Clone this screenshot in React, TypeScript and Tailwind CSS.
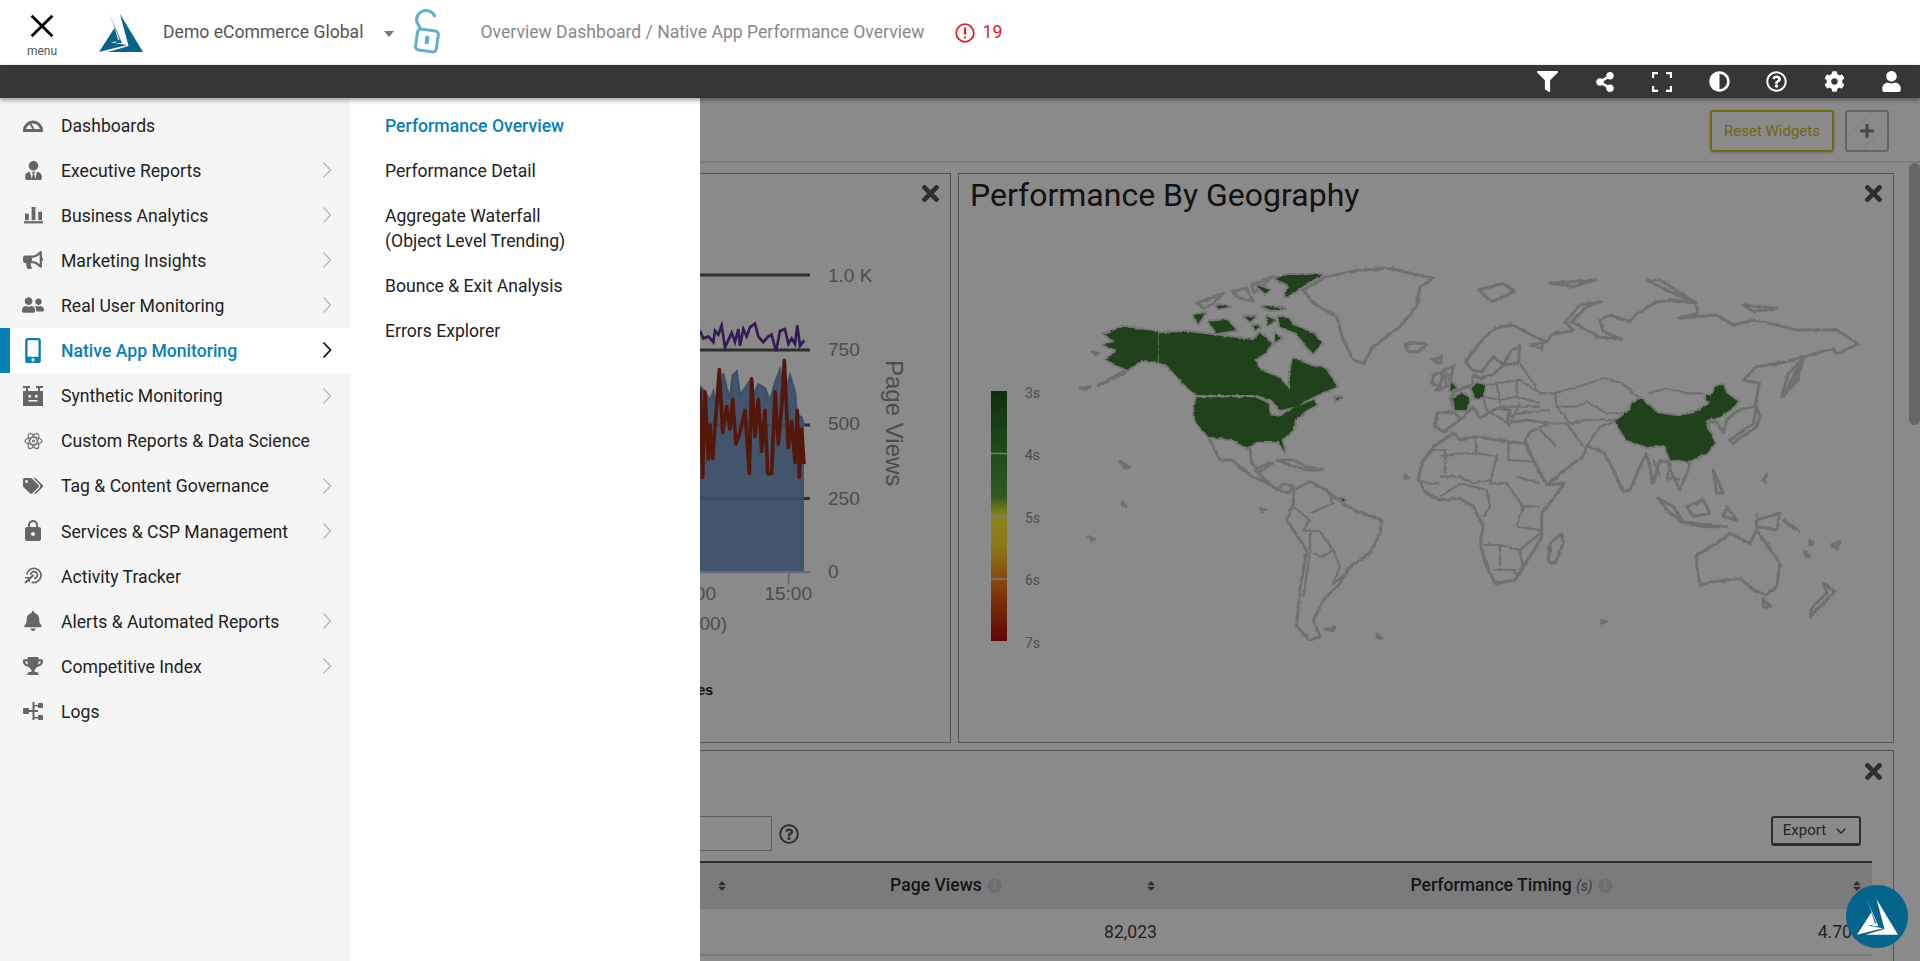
import { FaBell, FaBullhorn, FaCog, FaFilter, FaMobileAlt, FaRegQuestionCircle, FaShareAlt, FaTags, FaTimes, FaTrophy, FaUser, FaUserFriends, FaUserTie, FaAdjust, FaPlus, FaSort, FaInfoCircle } from "react-icons/fa"
import { MdLock } from "react-icons/md"
import { ChevronDown } from "lucide-react"
import type { ReactNode } from "react"

function Logo({ className, fill }: { className: string; fill: string }) {
  return (
    <svg viewBox="0 0 44 40" className={className} fill={fill}>
      <path d="M21 1 44 39 9 39 29.500 33Z" />
      <path d="M0 39 15.500 15 19.500 28 12 29.500 28 32Z" />
      <path d="M10 0 23 30 15.500 30 20.500 26.500Z" />
    </svg>
  )
}

function GaugeIcon() {
  return (
    <svg viewBox="0 0 20 14" className="w-[20px] h-[14px]" fill="none" stroke="#666" strokeWidth="3">
      <path d="M1.500 12.500A8.500 8.500 0 0 1 18.500 12.500Z" />
      <path d="M7.500 6 10.500 11" strokeWidth="2" />
    </svg>
  )
}

function BarsIcon() {
  return (
    <svg viewBox="0 0 20 18" className="w-[19px] h-[17px]" fill="#666">
      <rect x="1" y="7" width="4" height="7" />
      <rect x="8" y="0" width="4" height="14" />
      <rect x="15" y="5" width="4" height="9" />
      <rect x="0" y="15" width="20" height="2.400" />
    </svg>
  )
}

function RobotIcon() {
  return (
    <svg viewBox="0 0 20 20" className="w-[20px] h-[20px]" fill="#666">
      <path d="M0 0H7V2H5V5H3V2H0ZM13 0H20V2H17V5H15V2H13Z" />
      <rect x="0" y="5" width="20" height="15" />
      <rect x="5.500" y="9" width="2.500" height="2.500" fill="#f4f4f4" />
      <rect x="12" y="9" width="2.500" height="2.500" fill="#f4f4f4" />
      <rect x="5.500" y="14" width="9" height="1.600" fill="#f4f4f4" />
    </svg>
  )
}

function AtomIcon() {
  return (
    <svg viewBox="0 0 20 20" className="w-[19px] h-[20px]" fill="none" stroke="#777" strokeWidth="1.300">
      <ellipse cx="10" cy="10" rx="9" ry="3.800" />
      <ellipse cx="10" cy="10" rx="9" ry="3.800" transform="rotate(60 10 10)" />
      <ellipse cx="10" cy="10" rx="9" ry="3.800" transform="rotate(120 10 10)" />
      <circle cx="10" cy="10" r="1.600" fill="#777" stroke="none" />
    </svg>
  )
}

function ActivityIcon() {
  return (
    <svg viewBox="0 0 20 18" className="w-[19px] h-[17px]" fill="none" stroke="#666" strokeWidth="1.800">
      <path d="M3 8A7.500 7.500 0 1 1 8 16" />
      <path d="M7 8.500A3.600 3.600 0 1 1 10.500 12" />
      <path d="M1 17 10 8.500" strokeWidth="2.200" />
      <path d="M1 11.500H5.500V16" strokeWidth="1.600" />
    </svg>
  )
}

function LogsIcon() {
  return (
    <svg viewBox="0 0 20 18" className="w-[20px] h-[18px]" fill="#666">
      <rect x="0" y="6" width="6" height="6" rx="1" />
      <rect x="15" y="1" width="5" height="5" rx="1" />
      <rect x="15" y="13" width="5" height="5" rx="1" />
      <path d="M9.500 0H11.500V18H9.500ZM6 8H15V10H6ZM11 3H15V4.500H11ZM11 15H15V16.500H11Z" />
    </svg>
  )
}

const menu: { label: string; icon: ReactNode; sub?: boolean; active?: boolean }[] = [
  { label: "Dashboards", icon: <GaugeIcon /> },
  { label: "Executive Reports", icon: <FaUserTie size={19} color="#666" />, sub: true },
  { label: "Business Analytics", icon: <BarsIcon />, sub: true },
  { label: "Marketing Insights", icon: <FaBullhorn size={20} color="#666" />, sub: true },
  { label: "Real User Monitoring", icon: <FaUserFriends size={22} color="#666" />, sub: true },
  { label: "Native App Monitoring", icon: <FaMobileAlt size={25} color="#0a7fb5" />, sub: true, active: true },
  { label: "Synthetic Monitoring", icon: <RobotIcon />, sub: true },
  { label: "Custom Reports & Data Science", icon: <AtomIcon /> },
  { label: "Tag & Content Governance", icon: <FaTags size={20} color="#666" />, sub: true },
  { label: "Services & CSP Management", icon: <MdLock size={24} color="#666" />, sub: true },
  { label: "Activity Tracker", icon: <ActivityIcon /> },
  { label: "Alerts & Automated Reports", icon: <FaBell size={20} color="#666" />, sub: true },
  { label: "Competitive Index", icon: <FaTrophy size={20} color="#666" />, sub: true },
  { label: "Logs", icon: <LogsIcon /> },
]

const topIcons = [
  <FaFilter size={21} />,
  <FaShareAlt size={20} />,
  <svg viewBox="0 0 20 20" className="w-[20px] h-[20px]" fill="none" stroke="white" strokeWidth="2.400"><path d="M1 6V1H6M14 1H19V6M19 14V19H14M6 19H1V14" /></svg>,
  <FaAdjust size={21} />,
  <FaRegQuestionCircle size={21} />,
  <FaCog size={21} />,
  <FaUser size={21} />,
]

function Chart() {
  const purple = "30,435 40,455 55,450 70,465 75,435 85,445 95,420 105,480 115,460 125,440 135,465 145,430 150,475 160,430 170,450 180,425 195,415 205,450 220,465 235,450 245,445 258,490 270,435 285,430 295,470 305,455 315,470 322,420 330,475 343,460"
  const area = "30,585 45,600 60,625 70,600 80,640 90,620 100,550 110,590 120,620 128,555 140,545 150,610 165,590 180,570 190,610 205,580 225,590 240,625 255,575 270,540 285,610 300,555 315,600 320,660 335,670 342,690"
  const brown = "30,590 38,830 45,600 55,780 60,690 68,780 78,660 88,540 98,710 110,640 120,700 128,620 138,740 150,710 165,650 178,820 185,565 195,720 205,620 215,760 225,650 233,820 245,820 255,600 265,740 275,640 283,515 295,750 305,680 315,790 322,650 328,830 335,700 342,795"
  return (
    <svg viewBox="16 174 934 568" className="block w-full h-full">
      <path d="M640 275H810M640 350H810M640 425H810M640 498.500H810" stroke="#555" strokeWidth="3" />
      <g transform="translate(690 170) scale(0.3333 0.37)">
        <polygon points={`${area} 342,1085 -100,1085 -100,600`} fill="#6f93c4" opacity="0.9" />
        <polyline points={area} fill="none" stroke="#6c94ca" strokeWidth="7" />
        <polyline points={brown} fill="none" stroke="#9e2c14" strokeWidth="11" strokeLinejoin="round" />
        <polyline points={purple} fill="none" stroke="#65309c" strokeWidth="8" />
        <path d="M-100 1087H360M296 1087V1120" stroke="#bcc8d8" strokeWidth="6" />
      </g>
      <g fill="#8f8f8f" fontFamily='"Liberation Sans", Arial, sans-serif' fontSize="19">
        <text x="828" y="282">1.0 K</text>
        <text x="828" y="356">750</text>
        <text x="828" y="430">500</text>
        <text x="828" y="505">250</text>
        <text x="828" y="578">0</text>
        <text x="812" y="600" textAnchor="end">15:00</text>
        <text x="716" y="600" textAnchor="end">15:00</text>
        <text x="727" y="630" textAnchor="end">(+00:00)</text>
        <text x="886" y="360" fontSize="24" transform="rotate(90 886 360)">Page Views</text>
      </g>
      <text x="713" y="695" textAnchor="end" fill="#1a1a1a" fontWeight="700" fontSize="14" fontFamily='"Liberation Sans", Arial, sans-serif'>Page Views Minutes</text>
    </svg>
  )
}

function WorldMap() {
  const americasLand = [
    "M1030 360 1100 320 1200 300 1290 295 1350 310 1420 325 1380 350 1370 410 1320 470 1240 530 1210 580 1180 570 1150 510 1130 440 1060 400Z",
    "M1335 525 1365 518 1400 522 1375 545 1345 545Z",
    "M710 400 790 370 760 400 730 415Z",
    "M815 365 860 355 880 395 840 385Z",
    "M875 345 940 320 880 370Z",
    "M745 800 780 870 815 870 870 915 960 960 985 970 1000 950 975 940 950 960 905 920 885 900 920 880 940 880 900 905 875 880 870 835 820 810Z",
    "M1000 960 1050 935 1100 960 1150 1000 1180 1020 1265 1050 1260 1090 1230 1150 1170 1190 1140 1240 1090 1290 1060 1350 1080 1400 1050 1410 1010 1370 1020 1260 1040 1140 980 1050 1000 1000Z",
    "M950 870 1000 870 1040 890 1090 900 1040 900 990 885Z",
    "M480 875 510 892 495 895Z", "M360 655 390 650 375 658Z", "M395 545 415 550 405 555Z", "M415 645 500 600 490 612 430 640Z",
    "M488 995 500 1010 488 1005Z", "M900 1015 920 1020 905 1025Z", "M385 1100 405 1108 395 1110Z", "M1095 1378 1125 1372 1115 1382Z", "M1250 1393 1265 1405 1255 1405Z",
    "M1335 915 1345 925 1335 925Z", "M1425 660 1460 650 1450 600 1480 590 1470 640 1440 660Z",
  ]
  const americasLines = [
    "M1050 1080 1050 1150 1030 1280", "M1000 1010 1050 1050 1030 1080 1080 1085 1120 1140 1140 1190 1120 1240 1150 1220",
    "M1100 960 1120 1000 1050 1030", "M1060 1150 1090 1160 1120 1140", "M1110 985 1150 985 1150 1005",
  ]
  const americasGreen = [
    "M440 490 490 470 595 485 595 575 545 570 500 600 440 570 470 540 430 525 465 515 430 490Z",
    "M597 490 680 485 760 495 880 510 900 490 935 520 915 550 885 570 900 600 960 625 990 660 990 610 1000 565 1060 590 1085 590 1100 600 1130 650 1060 680 1010 710 985 715 960 720 935 690 890 675 710 675 690 660 660 630 620 585 597 578Z",
    "M710 682 885 682 925 700 930 735 955 740 1000 715 1060 690 1070 705 1040 720 1005 750 1000 780 965 810 975 845 955 815 890 815 860 835 820 810 745 800 710 760 700 730Z",
    "M955 440 985 445 1000 465 1060 490 1085 520 1060 550 1040 530 1010 490 960 470Z",
    "M920 440 945 450 925 465Z",
    "M985 315 1085 315 1040 340 1000 370 975 380 985 345 945 325Z",
    "M890 345 930 360 915 370Z", "M700 435 735 430 715 460Z", "M745 455 800 450 830 480 770 490Z",
    "M855 440 885 440 870 455Z", "M905 410 975 415 935 420Z", "M770 405 810 410 775 415Z", "M880 465 900 470 885 480Z", "M945 490 965 505 945 515Z", "M1125 682 1145 682 1130 690Z", "M1145 985 1155 990 1148 995Z",
    "M880 510 905 495 925 525 905 540Z",
  ]
  const eurasiaLand = [
    "M45 485 30 445 45 425 95 405 100 375 120 385 165 370 190 345 235 340 240 290 215 300 190 345 160 320 125 365 95 360 78 335 95 310 130 265 165 235 220 225 265 250 310 272 305 295 270 285 320 275 340 250 400 243 375 215 420 165 485 155 440 170 395 215 440 240 480 262 545 268 490 245 480 210 510 195 570 215 585 195 650 155 700 150 770 160 772 190 715 205 830 195 880 225 945 210 1070 240 1190 240 1255 282 1190 312 1180 295 1095 320 1045 370 1025 440 1075 390 1090 320 1040 335 950 350 910 390 958 400 945 470 895 480 860 510 850 550 830 515 800 515 825 580 800 610 750 632 745 660 720 720 700 680 680 690 690 640 660 630 640 700 620 610 600 650 570 720 550 725 510 640 490 605 440 590 425 625 400 640 320 705 290 650 255 575 270 545 330 520 260 510 200 520 210 480 170 475 120 505 100 470 60 510Z",
    "M40 550-20 590-55 640-65 690-40 730 0 750 60 745 100 770 130 830 120 880 140 950 165 1000 225 990 270 920 305 860 305 790 375 700 320 705 290 650 255 580 205 575 110 560 60 570Z",
    "M-10 490 45 485 60 510 10 545-15 530Z",
    "M115 120 190 100 225 125 155 155Z", "M330 100 465 90 400 110Z", "M620 90 660 90 770 160 700 130Z", "M910 165 1010 175 940 185Z",
    "M325 935 330 880 365 850 370 880 345 940Z",
    "M870 570 940 520 950 470 960 500 950 530 880 580Z", "M1030 440 1050 400 1090 320 1060 400Z",
    "M655 745 700 770 730 815 690 790Z", "M720 815 860 830 790 830Z", "M740 770 790 750 810 790 760 800Z", "M820 660 850 730 830 730Z", "M860 770 890 810 850 800Z", "M950 810 1020 790 1010 840 950 830Z", "M1030 810 1080 845 1050 830Z",
    "M770 915 830 880 870 850 930 880 950 840 1020 940 1010 1010 980 1035 940 1020 900 985 820 995 780 1005 770 950Z",
    "M970 1045 990 1070 970 1070Z", "M1150 1000 1185 1025 1110 1100 1115 1075 1160 1030Z",
    "M1095 905 1110 920 1095 915Z", "M1175 885 1200 875 1190 895Z", "M1110 870 1120 880 1110 885Z", "M485 1110 500 1115 485 1120Z", "M970 690 980 672 975 695Z", "M-25 330 5 320 0 340Z", "M-20 375 10 365 0 410-25 400Z",
  ]
  const eurasiaLines = [
    "M240 340 300 430 345 430 430 405 490 385 545 400 600 445", "M345 430 350 470 410 470 440 455 500 490 560 490", "M350 470 390 520 440 510 530 510",
    "M330 520 380 520 430 590", "M300 540 350 590", "M440 590 480 530 525 515", "M625 430 680 415 740 430 790 430",
    "M135 405 170 400 240 390 300 430", "M130 440 180 450 230 440 300 460", "M130 445 140 480 190 510 210 530", "M170 400 180 460", "M230 390 230 440", "M180 470 300 470", "M200 500 240 490 330 480", "M240 460 210 520",
    "M105 560 110 610 170 620 150 700 200 700", "M205 575 205 630 285 635", "M110 610 60 610 0 620", "M0 680 60 680 100 700 150 690", "M0 740 60 700 140 720 150 770 130 800", "M230 680 300 700", "M200 700 250 770 300 770", "M250 770 230 830 300 840", "M130 885 180 885 240 900 300 850", "M180 885 180 950", "M160 960 230 960", "M240 900 250 960", "M-60 640-20 600 15 600 15 670", "M-65 690-40 700 0 700",
    "M680 630 700 680 720 690", "M640 630 660 680", "M220 965 235 975", "M950 830 950 790",
  ]
  const eurasiaGreen = [
    "M40 445 65 430 90 445 80 480 45 480Z", "M95 415 110 400 135 405 130 440 105 445Z", "M20 370 30 390 45 410 50 415 30 420 35 400Z",
    "M525 515 570 480 575 460 605 445 625 465 655 490 710 498 760 490 810 460 795 440 820 430 825 410 850 405 860 430 895 455 870 480 840 500 800 510 800 530 825 580 800 610 750 632 690 630 675 585 620 590 560 570Z",
  ]
  const landProps = { fill: "#fff", stroke: "#cfcfcf", strokeWidth: 9, strokeLinejoin: "round" as const }
  const haloProps = { fill: "#fff", stroke: "#dedede", strokeWidth: 12, strokeLinejoin: "round" as const }
  return (
    <svg viewBox="959 222 934 520" className="block w-full h-[520px]">
      <defs>
        <linearGradient id="scale" x1="0" y1="0" x2="0" y2="1">
          <stop offset="0" stopColor="#1c581c" />
          <stop offset="0.25" stopColor="#3f8a34" />
          <stop offset="0.42" stopColor="#55a638" />
          <stop offset="0.5" stopColor="#fff530" />
          <stop offset="0.62" stopColor="#ffe030" />
          <stop offset="0.75" stopColor="#ff8a1e" />
          <stop offset="0.85" stopColor="#e24e12" />
          <stop offset="1" stopColor="#b20e0e" />
        </linearGradient>
        <filter id="rough" x="-5%" y="-5%" width="110%" height="110%" colorInterpolationFilters="sRGB">
          <feTurbulence type="fractalNoise" baseFrequency="0.22" numOctaves="2" seed="4" result="noise" />
          <feDisplacementMap in="SourceGraphic" in2="noise" scale="3" xChannelSelector="R" yChannelSelector="G" />
        </filter>
      </defs>
      <g filter="url(#rough)">
        <g transform="translate(960 170) scale(0.3333)">
          {americasLand.map((d) => <path key={d} d={d} {...landProps} />)}
          {americasLines.map((d) => <path key={d} d={d} fill="none" stroke="#cfcfcf" strokeWidth="7" />)}
          {americasGreen.map((d) => <path key={d} d={d} {...haloProps} />)}
          {americasGreen.map((d) => <path key={d} d={d} fill="#3c7a30" />)}
        </g>
        <g transform="translate(1440 250) scale(0.3333)">
          {eurasiaLand.map((d) => <path key={d} d={d} {...landProps} />)}
          {eurasiaLines.map((d) => <path key={d} d={d} fill="none" stroke="#cfcfcf" strokeWidth="6.500" />)}
          {eurasiaGreen.map((d) => <path key={d} d={d} {...haloProps} />)}
          {eurasiaGreen.map((d) => <path key={d} d={d} fill="#3c7a30" />)}
        </g>
      </g>
      <rect x="991" y="391" width="16" height="250" fill="url(#scale)" />
      <path d="M991 453.500H1007M991 517H1007M991 579H1007" stroke="#e2e2e2" strokeWidth="1.600" />
      <g fill="#909090" fontSize="14" fontFamily="Roboto, sans-serif">
        <text x="1025" y="398">3s</text>
        <text x="1025" y="460">4s</text>
        <text x="1025" y="523">5s</text>
        <text x="1025" y="585">6s</text>
        <text x="1025" y="648">7s</text>
      </g>
    </svg>
  )
}

export default function App() {
  return (
    <div className="h-[961px] w-[1920px] overflow-hidden flex flex-col bg-white font-['Roboto',sans-serif]">
      {/* top header */}
      <header className="h-[65px] shrink-0 flex items-center bg-white">
        <div className="w-[84px] flex flex-col items-center pt-[3px]">
          <svg viewBox="0 0 22 22" className="w-[24px] h-[24px]" fill="none" stroke="#000" strokeWidth="2.600"><path d="M1.500 1.500 20.500 20.500M20.500 1.500 1.500 20.500" /></svg>
          <span className="text-[12px] leading-[14px] mt-[6px] mb-[-3px] text-[#555]">menu</span>
        </div>
        <Logo className="w-[44px] h-[40px] ml-[15px] mb-[-1px]" fill="#0b6288" />
        <span className="ml-[20px] text-[17.600px] text-[#555]">Demo eCommerce Global</span>
        <span className="ml-[21px] mt-[3px] w-0 h-0 border-x-[5px] border-x-transparent border-t-[6px] border-t-[#777]" />
        <svg viewBox="0 0 27 46" className="ml-[20px] w-[27px] h-[46px] mt-[-1px]" fill="none" stroke="#5fb0c8" strokeWidth="3">
          <path d="M21 8C19 2 12 0 7 3 2 6 1 12 5 17L7 20" />
          <rect x="2.500" y="21" width="21" height="21" rx="3.500" transform="rotate(8 13 31)" />
          <path d="M13.500 27 12.500 35" strokeWidth="4" />
        </svg>
        <span className="ml-[39px] text-[17.600px] text-[#888]">Overview Dashboard / Native App Performance Overview</span>
        <svg viewBox="0 0 20 20" className="ml-[30px] w-[20px] h-[20px]" fill="none" stroke="#e02020" strokeWidth="1.800">
          <circle cx="10" cy="10" r="8.800" />
          <path d="M10 4.500V11.500M10 13.500V15.500" strokeWidth="2.200" />
        </svg>
        <span className="ml-[8px] text-[17.600px] text-[#e02020]">19</span>
      </header>

      {/* dark toolbar */}
      <div className="relative z-30 h-[33px] shrink-0 bg-[#363636] shadow-[0_2px_5px_rgba(0,0,0,0.4)] flex items-center justify-end text-white">
        {topIcons.map((icon, i) => (
          <span key={i} className="w-[57.300px] flex justify-center">{icon}</span>
        ))}
      </div>

      <main className="relative flex-1 min-h-0 overflow-hidden bg-white">
        {/* page content, dimmed by the overlay */}
        <div className="h-[65px] border-b-2 border-[#e6e6e6] flex justify-end items-start pt-[12px] pr-[31px] gap-[11px]">
          <button className="w-[124px] h-[42px] rounded-[3px] border-2 border-[#d2c420] text-[15px] text-[#d0c020] shadow-[0_1px_3px_rgba(0,0,0,0.2)]">Reset Widgets</button>
          <button className="w-[44px] h-[42px] rounded-[3px] border-2 border-[#bbb] text-[#888] flex items-center justify-center bg-[repeating-linear-gradient(135deg,transparent,transparent_18px,#e4e4e4_18px,#e4e4e4_19px)]">
            <FaPlus size={16} />
          </button>
        </div>

        <div className="flex gap-[7px] pl-[15px] pr-[26px] mt-[10px]">
          <section className="relative flex-1 h-[570px] border border-[#999]">
            <FaTimes size={25} className="absolute top-[7px] right-[7px] text-[#555]" />
            <Chart />
          </section>
          <section className="relative flex-1 h-[570px] border border-[#999]">
            <FaTimes size={25} className="absolute top-[7px] right-[7px] text-[#555]" />
            <h2 className="h-[48px] pl-[11px] text-[32px] leading-[42px] text-[#222]">Performance By Geography</h2>
            <WorldMap />
          </section>
        </div>

        <section className="relative mt-[7px] ml-[15px] mr-[26px] h-[260px] border border-[#999] border-b-0">
          <FaTimes size={25} className="absolute top-[8px] right-[7px] text-[#555]" />
          <div className="flex items-start mt-[65px] pr-[32px] h-[45px]">
            <input className="ml-[400px] w-[356px] h-[35px] border border-[#aaa] bg-white" />
            <FaRegQuestionCircle size={20} className="ml-[7px] mt-[8px] text-[#555]" />
            <button className="ml-auto w-[90px] h-[30px] rounded-[3px] border-2 border-b-[3px] border-[#555] flex items-center justify-center gap-[7px] text-[15px] text-[#444]">
              Export <ChevronDown size={16} />
            </button>
          </div>
          <div className="mr-[21px] border-t-2 border-[#555]">
            <div className="grid grid-cols-[714px_430px_713px] h-[46px] bg-[#e3e4e7] items-center font-medium text-[17.600px] text-[#2a2a2a]">
              <div className="flex items-center justify-end pr-[2px] text-[#555]"><FaSort size={12} /></div>
              <div className="flex items-center pr-[3px] text-[#555]">
                <span className="flex-1 flex justify-center items-center gap-[5px] pl-[17px] pb-[1px] text-[#2a2a2a]">Page Views <FaInfoCircle size={15} className="text-[#ccc]" /></span>
                <FaSort size={12} />
              </div>
              <div className="flex items-center pr-[10px] text-[#555]">
                <span className="flex-1 flex justify-center items-center gap-[5px] pl-[12px] pb-[1px] text-[#2a2a2a]">
                  <span>Performance Timing <i className="font-normal text-[14px] text-[#666]">(s)</i></span>
                  <FaInfoCircle size={15} className="text-[#ccc]" />
                </span>
                <FaSort size={12} />
              </div>
            </div>
            <div className="grid grid-cols-[714px_430px_713px] h-[47px] pt-[1px] items-center border-b-2 border-[#ddd] text-[17.600px] text-[#444]">
              <div />
              <div className="text-right pr-[3px]">82,023</div>
              <div className="text-right pr-[21px]">4.70</div>
            </div>
          </div>
        </section>

        {/* scrollbar thumb */}
        <div className="absolute right-0 top-[65px] w-[11px] h-[262px] rounded-[6px] bg-[#bdbdbd]" />

        {/* overlay that dims the page behind the menu */}
        <div className="absolute inset-0 bg-black/46" />

        {/* open menu */}
        <nav className="absolute left-0 top-0 bottom-0 flex">
          <ul className="w-[350px] bg-[#f5f5f5] pt-[4.500px]">
            {menu.map((item) => (
              <li
                key={item.label}
                className={
                  item.active
                    ? "h-[45.080px] flex items-center bg-white border-l-[10px] border-[#0a7fb5] text-[#0a7fb5] font-medium"
                    : "h-[45.080px] flex items-center border-l-[10px] border-transparent text-[#222]"
                }
              >
                <span className="w-[24px] ml-[11px] flex justify-center">{item.icon}</span>
                <span className="ml-[16px] pt-[2px] text-[17.600px] whitespace-nowrap">{item.label}</span>
                {item.sub && (
                  <svg viewBox="0 0 10 18" className="ml-auto mr-[18px] w-[10px] h-[18px]" fill="none" stroke={item.active ? "#111" : "#bbb"} strokeWidth={item.active ? 1.800 : 1.500}>
                    <path d="M1.500 1.500 8.500 9 1.500 16.500" />
                  </svg>
                )}
              </li>
            ))}
          </ul>
          <ul className="w-[350px] bg-white px-[35px] pt-[5.500px] text-[17.600px] leading-[25px] text-[#222]">
            <li className="py-[10px] text-[#0a7fb5] font-medium">Performance Overview</li>
            <li className="py-[10px]">Performance Detail</li>
            <li className="py-[10px]">Aggregate Waterfall<br />(Object Level Trending)</li>
            <li className="py-[10px]">Bounce &amp; Exit Analysis</li>
            <li className="py-[10px]">Errors Explorer</li>
          </ul>
        </nav>

        {/* floating help bubble */}
        <div className="absolute right-[12px] bottom-[13px] w-[62px] h-[63px] rounded-full bg-[#05648c] flex items-center justify-center">
          <Logo className="w-[41px] h-[38px]" fill="#fff" />
        </div>
      </main>
    </div>
  )
}
